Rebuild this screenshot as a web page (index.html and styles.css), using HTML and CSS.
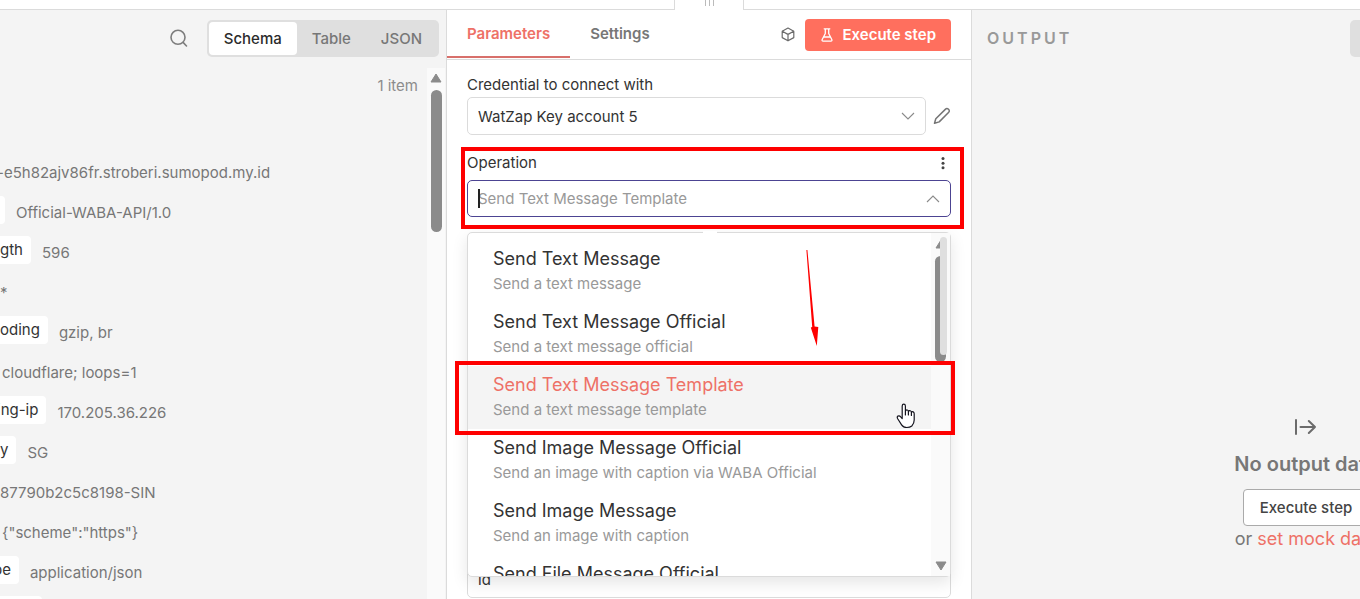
FILE: index.html
```html
<!DOCTYPE html>
<html lang="en">
<head>
<meta charset="utf-8">
<title>Node details</title>
<link rel="stylesheet" href="styles.css">
</head>
<body>
<div class="editor">
  <header class="topbar">
    <div class="drag-handle"><span></span><span></span><span></span></div>
  </header>
  <main class="panels">
    <section class="input-panel">
      <div class="input-head">
        <button class="icon-button" aria-label="Search">
          <svg width="20" height="20" viewBox="0 0 20 20" fill="none" stroke="#7d7d7d" stroke-width="1.6" stroke-linecap="round"><circle cx="9" cy="8.3" r="7"/><path d="M14.1 13.4 17.5 17"/></svg>
        </button>
        <div class="view-switch">
          <button class="view active">Schema</button>
          <button class="view">Table</button>
          <button class="view">JSON</button>
        </div>
      </div>
      <p class="item-count">1 item</p>
      <div class="schema">
        <div class="row scrolled"><span class="value">-e5h82ajv86fr.stroberi.sumopod.my.id</span></div>
        <div class="row"><span class="pill blank"></span><span class="value">Official-WABA-API/1.0</span></div>
        <div class="row"><span class="pill">gth</span><span class="value">596</span></div>
        <div class="row"><span class="value">*</span></div>
        <div class="row"><span class="pill">oding</span><span class="value">gzip, br</span></div>
        <div class="row indent"><span class="value">cloudflare; loops=1</span></div>
        <div class="row scrolled"><span class="pill">ing-ip</span><span class="value">170.205.36.226</span></div>
        <div class="row"><span class="pill">y</span><span class="value">SG</span></div>
        <div class="row"><span class="value">87790b2c5c8198-SIN</span></div>
        <div class="row indent"><span class="value">{"scheme":"https"}</span></div>
        <div class="row scrolled-far"><span class="pill">pe</span><span class="value">application/json</span></div>
        <div class="row"><span class="pill wide"></span></div>
      </div>
      <div class="scrollbar">
        <svg width="12" height="10" viewBox="0 0 12 10"><path d="M6 1 11 9H1Z" fill="#8b8b8b" stroke="#8b8b8b" stroke-linejoin="round"/></svg>
        <div class="thumb"></div>
      </div>
    </section>

    <section class="params-panel">
      <div class="tabs">
        <button class="tab active">Parameters</button>
        <button class="tab">Settings</button>
        <div class="tab-actions">
          <svg width="16" height="16" viewBox="0 0 16 16" fill="none" stroke="#6b6b6b" stroke-width="1.2" stroke-linejoin="round" stroke-linecap="round"><path d="M8 1 13.8 4.2V10.6L8 13.8 2.2 10.6V4.2ZM2.2 4.2 8 7.4 13.8 4.2M8 7.4V13.8"/></svg>
          <button class="execute">
            <svg width="14" height="16" viewBox="0 0 14 16" fill="none" stroke="#fff" stroke-width="1.3" stroke-linecap="round" stroke-linejoin="round"><path d="M4.2 1.8H9.8M5.3 1.8V6.5L2.2 12.5Q1.6 14.2 3.2 14.2H10.8Q12.4 14.2 11.8 12.5L8.7 6.5V1.8M3.9 10H10.1"/></svg>
            Execute step
          </button>
        </div>
      </div>
      <div class="form">
        <label class="label" for="credential">Credential to connect with</label>
        <div class="credential">
          <div class="select-wrap">
            <select id="credential" class="control"><option>WatZap Key account 5</option></select>
            <svg class="chevron" width="14" height="8" viewBox="0 0 14 8" fill="none" stroke="#8a8a8a" stroke-width="1.1"><path d="M1 1 7 7 13 1"/></svg>
          </div>
          <button class="icon-button" aria-label="Edit credential">
            <svg width="18" height="18" viewBox="0 0 18 18" fill="none" stroke="#757575" stroke-width="1.5" stroke-linejoin="round"><path d="M12.3 2.4Q13.9.8 15.5 2.3 17.1 3.9 15.5 5.5L6.2 14.9 1.5 16.3 2.8 11.8Z"/></svg>
          </button>
        </div>

        <div class="operation">
          <div class="label-row">
            <label class="label" for="operation">Operation</label>
            <button class="icon-button" aria-label="Options"><svg width="4" height="14" viewBox="0 0 4 14" fill="#444"><circle cx="2" cy="2.6" r="1.5"/><circle cx="2" cy="7.2" r="1.5"/><circle cx="2" cy="11.8" r="1.5"/></svg></button>
          </div>
          <div class="select-wrap">
            <input id="operation" class="control focused" type="text" placeholder="Send Text Message Template">
            <span class="caret"></span>
            <svg class="chevron" width="14" height="8" viewBox="0 0 14 8" fill="none" stroke="#8a8a8a" stroke-width="1.1"><path d="M1 7 7 1 13 7"/></svg>
          </div>
          <div class="highlight field-highlight"></div>
          <div class="menu">
            <span class="notch"></span>
            <div class="options">
              <button class="option"><span class="name">Send Text Message</span><span class="hint">Send a text message</span></button>
              <button class="option"><span class="name">Send Text Message Official</span><span class="hint">Send a text message official</span></button>
              <button class="option selected"><span class="name">Send Text Message Template</span><span class="hint">Send a text message template</span></button>
              <button class="option"><span class="name">Send Image Message Official</span><span class="hint">Send an image with caption via WABA Official</span></button>
              <button class="option"><span class="name">Send Image Message</span><span class="hint">Send an image with caption</span></button>
              <button class="option"><span class="name">Send File Message Official</span></button>
            </div>
            <div class="menu-scroll">
              <svg width="12" height="10" viewBox="0 0 12 10"><path d="M6 1 11 9H1Z" fill="#8b8b8b" stroke="#8b8b8b" stroke-linejoin="round"/></svg>
              <div class="menu-thumb"></div>
              <svg class="down" width="12" height="10" viewBox="0 0 12 10"><path d="M1 1H11L6 9Z" fill="#8b8b8b" stroke="#8b8b8b" stroke-linejoin="round"/></svg>
              <div class="soft-thumb"></div>
            </div>
            <div class="highlight option-highlight"></div>
            <svg class="pointer-arrow" width="14" height="96" viewBox="0 0 14 96" fill="#fe0000"><path d="M1.4 0H2.4L9.6 76.5 13.3 77 11.8 96 5.8 77.5 7.2 77Z"/></svg>
            <svg class="hand" width="20" height="26" viewBox="0 0 20 26" fill="#fff" stroke="#15151f" stroke-width="1.2" stroke-linejoin="round" stroke-linecap="round"><path d="M6.2 15.5V3Q6.3 1.2 7.8 1.2 9.3 1.2 9.4 3V8.2Q9.9 6.7 11.3 7 12.3 7.2 12.4 8.6 13 7.4 14.3 7.8 15.3 8.1 15.4 9.4 16 8.4 17.2 8.9 18.2 9.4 18.2 10.8V17Q18.2 20.5 15.8 23 14 24.5 10.7 24.5 7.4 24.5 5.6 21.8L1.7 15.7Q.7 14 1.9 13.1 3.4 12.3 4.7 13.9ZM9.4 8.2V12M12.4 8.6V12M15.4 9.4V12.5"/></svg>
          </div>
        </div>
        <input class="control template" type="text" aria-label="Language" value="id">
      </div>
    </section>

    <section class="output-panel">
      <div class="output-body">
        <div class="output-head"><h2>OUTPUT</h2><div class="output-switch"></div></div>
        <div class="empty">
          <svg width="24" height="20" viewBox="0 0 24 20" fill="none" stroke="#6b6b6b" stroke-width="2" stroke-linecap="round" stroke-linejoin="round"><path d="M2 3V17M6.5 10H21M14.8 4 21 10 14.8 16"/></svg>
          <h3>No output data</h3>
          <button class="run">Execute step</button>
          <p>or <a href="#">set mock data</a></p>
        </div>
      </div>
    </section>
  </main>
</div>
</body>
</html>
```

FILE: styles.css
```css
* { box-sizing: border-box; }
body { margin: 0; font-family: Inter, "Liberation Sans", sans-serif; font-size: 15px; color: #333; }
button, input, select { font: inherit; color: inherit; margin: 0; }
button { border: 0; padding: 0; background: none; cursor: pointer; }
h2, h3, p { margin: 0; }
svg { display: block; flex: none; }

.editor { height: 100vh; display: flex; flex-direction: column; overflow: hidden; }
.topbar { flex: none; height: 10px; border-bottom: 1px solid #dbdbdb; position: relative; z-index: 2; }
.drag-handle { position: absolute; left: calc(50% - 6px); top: 0; width: 70px; height: 10px; background: #fff; border: solid #dbdbdb; border-width: 0 1px; display: flex; justify-content: center; gap: 3px; }
.drag-handle span { width: 1px; height: 6px; background: #bbb; }
.panels { flex: 1; min-height: 0; display: grid; grid-template-columns: minmax(0, 446fr) minmax(0, 526fr) minmax(0, 388fr); }

/* Input */
.input-panel { position: relative; background: #f4f4f4; overflow: hidden; }
.input-head { display: flex; justify-content: flex-end; align-items: center; gap: 18px; padding: 10px 7px 0 0; }
.view-switch { display: flex; padding: 2px; background: #dfdfdf; border-radius: 5px; }
.view { height: 33px; padding: 0 15px; border-radius: 4px; color: #777; font-weight: 500; }
.view.active { background: #fff; color: #2b2b2b; }
.item-count { margin-top: 18px; padding-right: 28px; line-height: 22px; text-align: right; color: #8c8c8c; }
.schema { margin-top: 59px; display: flex; flex-direction: column; gap: 12px; }
.row { height: 28px; flex: none; display: flex; align-items: center; gap: 11px; white-space: nowrap; }
.row.indent { padding-left: 2px; }
.row.scrolled { margin-left: -3px; }
.row.scrolled-far { margin-left: -7px; }
.pill { height: 28px; line-height: 28px; padding-right: 8px; background: #fff; border-radius: 0 4px 4px 0; }
.pill.blank { width: 5px; padding: 0; }
.pill.wide { width: 42px; }
.value { padding-top: 5px; color: #777; }
.scrollbar { position: absolute; right: 1px; top: 58px; bottom: 0; width: 18px; padding-top: 5px; background: #fafafa; display: flex; flex-direction: column; align-items: center; gap: 7px; }
.thumb { width: 11px; height: 142px; border-radius: 6px; background: #8b8b8b; }

/* Parameters */
.params-panel { border: solid #dbdbdb; border-width: 0 1px; background: #fff; display: flex; flex-direction: column; }
.tabs { height: 50px; flex: none; display: flex; border-bottom: 1px solid #dbdbdb; padding-right: 20px; }
.tab { padding: 0 20px; height: 48px; color: #777; font-weight: 600; border-bottom: 2px solid transparent; }
.tab.active { color: #ee7167; border-color: #d8706b; }
.tab-actions { margin-left: auto; display: flex; align-items: center; gap: 9px; }
.execute { height: 32px; padding: 0 15px; display: flex; align-items: center; gap: 8px; border-radius: 4px; background: #ff6f5e; color: #fff; font-weight: 600; }
.form { padding: 14px 20px 0; display: flex; flex-direction: column; }
.label { line-height: 22px; }
.credential { display: flex; align-items: center; gap: 7px; margin-top: 1px; }
.select-wrap { position: relative; flex: 1; }
.control { appearance: none; display: block; width: 100%; height: 38px; padding: 0 10px; border: 1px solid #dbdbdb; border-radius: 5px; background: #fff; outline: none; }
.focused { height: 37px; border-color: #4c4492; }
.focused::placeholder { color: #999; opacity: 1; }
.chevron { position: absolute; right: 11px; top: 15px; }
.caret { position: absolute; left: 11px; top: 9px; width: 2px; height: 19px; background: #222; }
.operation { position: relative; margin-top: 17px; }
.label-row { display: flex; justify-content: space-between; align-items: center; padding-right: 6px; height: 28px; padding-bottom: 6px; }
.template { margin-top: 343px; }
.highlight { position: absolute; border: 4px solid #fe0000; pointer-events: none; }
.field-highlight { inset: -5px -13px -12px -6px; }

.menu { position: absolute; left: 0; right: 0; top: calc(100% + 15px); height: 345px; display: flex; background: #fff; border: 1px solid #dbdbdb; border-radius: 5px; box-shadow: 0 6px 16px rgba(0, 0, 0, .1); }
.notch { position: absolute; left: 50%; margin-left: -6px; top: -2px; width: 14px; height: 3px; background: #fff; }
.options { flex: 1; padding-top: 7px; overflow: hidden; display: flex; flex-direction: column; }
.option { flex: none; height: 63px; padding: 6px 25px 0; display: flex; flex-direction: column; text-align: left; }
.name { font-size: 18px; line-height: 26px; }
.hint { line-height: 24px; color: #999; }
.selected { background: #f4f4f4; }
.selected .name { color: #ee7167; }
.menu-scroll { position: relative; width: 19px; padding: 6px 0 5px 4px; background: #fafafa; display: flex; flex-direction: column; gap: 7px; }
.menu-thumb { width: 11px; height: 106px; border-radius: 6px; background: #8b8b8b; }
.down { margin-top: auto; }
.soft-thumb { position: absolute; right: 3px; top: 4px; width: 7px; height: 118px; border-radius: 4px; background: #dfdfdf; }
.option-highlight { left: -13px; right: -5px; top: 128px; height: 74px; }
.pointer-arrow { position: absolute; right: 131px; top: 17px; }
.hand { position: absolute; right: 34px; top: 170px; }

/* Output */
.output-panel { background: #f4f4f4; overflow: hidden; }
.output-body { min-width: 668px; height: 100%; display: flex; flex-direction: column; }
.output-head { display: flex; justify-content: space-between; align-items: center; padding: 10px 8px 0 15px; height: 47px; }
.output-head h2 { font-size: 16px; letter-spacing: 3px; line-height: 20px; padding-bottom: 2px; color: #999; font-weight: 600; }
.output-switch { width: 282px; height: 37px; border-radius: 5px; background: #dfdfdf; }
.empty { margin: auto 0 47px; display: flex; flex-direction: column; align-items: center; color: #777; font-size: 18px; }
.empty h3 { margin: 14px 0 12px; line-height: 26px; font-size: 20px; font-weight: 600; }
.run { height: 37px; padding: 0 16px; border: 1px solid #aaa; border-radius: 4px; background: #fff; color: #444; font-size: 15px; font-weight: 500; }
.empty p { line-height: 26px; }
.empty a { color: #ee7167; text-decoration: none; }
```
